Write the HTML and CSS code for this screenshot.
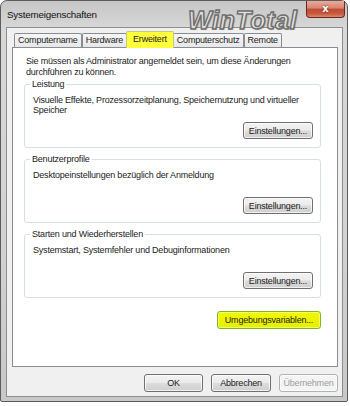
FILE: index.html
```html
<!DOCTYPE html>
<html lang="de">
<head>
    <meta charset="UTF-8">
    <title>Systemeigenschaften</title>
    <link rel="stylesheet" href="styles.css">
</head>
<body>
    <div class="window">
        <div class="titlebar">
            <span class="title">Systemeigenschaften</span>
            <button class="close">x</button>
        </div>
        <span class="logo">WinTotal</span>

        <div class="client">
            <ul class="tabs">
                <li>Computername</li>
                <li>Hardware</li>
                <li class="active">Erweitert</li>
                <li>Computerschutz</li>
                <li>Remote</li>
            </ul>

            <div class="panel">
                <p class="intro">Sie müssen als Administrator angemeldet sein, um diese Änderungen<br>durchführen zu können.</p>

                <fieldset class="group">
                    <legend>Leistung</legend>
                    <p>Visuelle Effekte, Prozessorzeitplanung, Speichernutzung und virtueller Speicher</p>
                    <button class="btn btn-settings">Einstellungen...</button>
                </fieldset>

                <fieldset class="group">
                    <legend>Benutzerprofile</legend>
                    <p>Desktopeinstellungen bezüglich der Anmeldung</p>
                    <button class="btn btn-settings">Einstellungen...</button>
                </fieldset>

                <fieldset class="group">
                    <legend>Starten und Wiederherstellen</legend>
                    <p>Systemstart, Systemfehler und Debuginformationen</p>
                    <button class="btn btn-settings">Einstellungen...</button>
                </fieldset>

                <div class="env-row">
                    <button class="btn btn-env">Umgebungsvariablen...</button>
                </div>
            </div>

            <div class="dialog-buttons">
                <button class="btn btn-ok">OK</button>
                <button class="btn btn-cancel">Abbrechen</button>
                <button class="btn btn-apply" disabled>Übernehmen</button>
            </div>
        </div>
    </div>
</body>
</html>
```

FILE: styles.css
```css
body {
    margin: 0;
    background: #fff;
    font-family: "Liberation Sans", Arial, sans-serif;
    font-size: 9px;
    letter-spacing: -0.2px;
    color: #1b1b1b;
}
.window {
    position: relative;
    width: 348px;
    height: 402px;
    box-sizing: border-box;
    display: flex;
    flex-direction: column;
    padding: 0 4px 4px 5px;
    border: 1px solid #5c5c5c;
    border-radius: 7px 7px 2px 2px;
    background: linear-gradient(#c6c6c6, #d8d8d8 28px, #d2d2d2 60%, #c8c8c8);
}
.titlebar {
    height: 26px;
    display: flex;
    justify-content: space-between;
    align-items: center;
    margin-right: -2px;
}
.title {
    padding-left: 1px;
    font-size: 9.8px;
    color: #111;
}
.close {
    align-self: flex-start;
    width: 39px;
    height: 17px;
    padding: 0;
    border: 1px solid #70281d;
    border-top: none;
    border-radius: 0 0 4px 4px;
    background: linear-gradient(#e8ab9b, #d58571 45%, #c24a33 50%, #c75b40 80%, #db8a6a);
    color: #fff;
    font-family: "DejaVu Sans", sans-serif;
    font-size: 10px;
    font-weight: bold;
    line-height: 14px;
    text-shadow: 0 0 2px #5a1a10;
}
.logo {
    position: absolute;
    left: 187px;
    top: 9px;
    font-size: 25px;
    line-height: 20px;
    font-weight: bold;
    font-style: italic;
    letter-spacing: 0.6px;
    color: rgba(236, 236, 236, 0.85);
    -webkit-text-stroke: 1.4px #6e6e6e;
    text-shadow: 1px 1px 1px rgba(0, 0, 0, 0.25);
}
.client {
    flex: 1;
    display: flex;
    flex-direction: column;
    padding: 3px 4px 4px 5px;
    border: 1px solid #8e8e8e;
    background: #f0f0f0;
}

/* tabs */
.tabs {
    display: flex;
    align-items: flex-end;
    height: 16px;
    margin: 0;
    padding: 0 0 0 2px;
    list-style: none;
}
.tabs li {
    height: 13px;
    padding: 0 3px;
    line-height: 13px;
    border: 1px solid #898c95;
    border-bottom: none;
    border-radius: 2px 2px 0 0;
    background: linear-gradient(#f7f7f7, #e7e7e7);
}
.tabs li.active {
    position: relative;
    z-index: 2;
    height: 16px;
    line-height: 15px;
    margin: 0 -1px -1px -1px;
    padding: 0 6px;
    background: #ffff3c;
    border-color: #c8c880;
}

/* panel */
.panel {
    height: 320px;
    box-sizing: border-box;
    padding: 8px 16px 0 11px;
    border: 1px solid #898c95;
    background: #fff;
}
.intro {
    margin: 0 0 1px;
    padding-left: 2px;
    line-height: 11px;
}
.group {
    height: 69px;
    box-sizing: border-box;
    display: flex;
    flex-direction: column;
    margin: 0;
    padding: 5px 7px 8px 8px;
    border: 1px solid #d5dfe5;
    border-radius: 3px;
}
.group + .group {
    margin-top: 6px;
}
.group legend {
    padding: 0 2px;
    margin-left: -3px;
    line-height: 11px;
}
.group p {
    margin: 0;
    line-height: 10px;
}
.env-row {
    display: flex;
    justify-content: flex-end;
    margin-top: 13px;
}

/* buttons */
.btn {
    height: 18px;
    padding: 0;
    border: 1px solid #707070;
    border-radius: 3px;
    background: linear-gradient(#f3f3f3, #ebebeb 48%, #dcdcdc 52%, #cfcfcf);
    box-shadow: inset 0 0 0 1px rgba(255, 255, 255, 0.7);
    font-family: inherit;
    font-size: 9px;
    letter-spacing: -0.2px;
    color: #1b1b1b;
}
.btn-settings {
    align-self: flex-end;
    margin-top: auto;
    width: 70px;
    height: 17px;
}
.btn-env {
    width: 104px;
    border-color: #7cba25;
    background: linear-gradient(#f4f800, #e4ee00);
    box-shadow: inset 0 0 0 1px rgba(255, 255, 160, 0.6);
}
.dialog-buttons {
    display: flex;
    justify-content: flex-end;
    gap: 8px;
    margin-top: 7px;
}
.btn-ok,
.btn-apply {
    width: 59px;
}
.btn-cancel {
    width: 60px;
}
.btn-apply {
    border-color: #adb2b5;
    background: #f4f4f4;
    color: #9d9d9d;
}
```
